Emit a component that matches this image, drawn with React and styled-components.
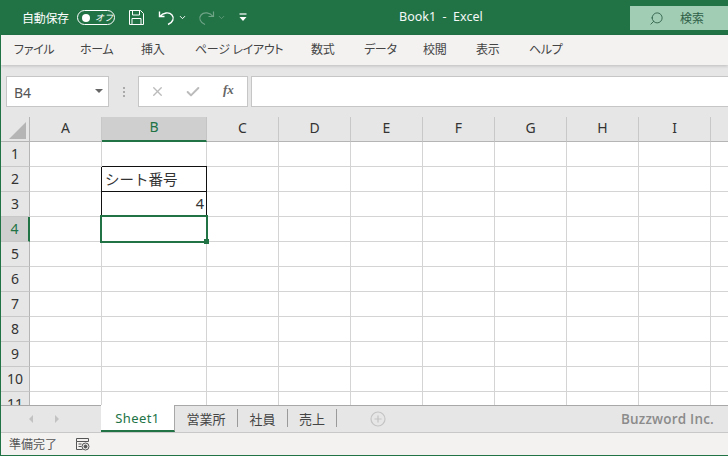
import React from 'react'
import styled, { createGlobalStyle } from 'styled-components'
import { Search, ChevronDown, X, Check } from 'lucide-react'

const Global = createGlobalStyle`
  html, body { margin: 0; padding: 0; background: #fff; }
  body { font-family: "Noto Sans", "Noto Sans CJK JP", sans-serif; }
  * { box-sizing: border-box; }
`

const Window = styled.div`
  width: 728px;
  height: 456px;
  display: flex;
  flex-direction: column;
  overflow: hidden;
  border-left: 1px solid #217346;
  border-bottom: 1px solid #217346;
`

const TitleBar = styled.div`
  height: 35px;
  flex: none;
  margin-left: -1px;
  background: #217346;
  color: #fff;
  display: flex;
  align-items: center;
  position: relative;
  padding-left: 22px;
`

const AutoSave = styled.span`
  font-size: 12px;
  width: 49px;
  white-space: nowrap;
  letter-spacing: -0.3px;
`

const Toggle = styled.span`
  width: 38px;
  height: 15px;
  margin-left: 6px;
  border: 1px solid #fff;
  border-radius: 8px;
  display: flex;
  align-items: center;
  padding-left: 4px;
  &::before {
    content: '';
    width: 8px;
    height: 8px;
    border-radius: 50%;
    background: #fff;
  }
`

const ToggleLabel = styled.span`
  font-size: 9px;
  font-style: italic;
  margin-left: 5px;
  line-height: 1;
`

const QuickIcon = styled.svg`
  flex: none;
  margin-left: ${p => p.$gap || 0}px;
  opacity: ${p => p.$dim ? 0.35 : 1};
`

const TitleText = styled.div`
  position: absolute;
  left: 399px;
  top: 9px;
  font-size: 12.5px;
  line-height: 16px;
  white-space: pre;
  color: #f4f8f6;
`

const SearchBox = styled.div`
  position: absolute;
  left: 630px;
  top: 6px;
  width: 98px;
  height: 24px;
  background: #a0cdb4;
  color: #2f5f48;
  display: flex;
  align-items: center;
  padding-left: 19px;
  font-size: 12px;
  gap: 16px;
`

const RibbonTabs = styled.div`
  height: 30px;
  flex: none;
  background: #f3f2f1;
  display: flex;
  align-items: center;
  padding: 0 0 2px 13px;
  font-size: 12px;
  letter-spacing: -0.3px;
  color: #444;
  font-feature-settings: "palt";
  box-shadow: 0 1px 3px rgba(0, 0, 0, 0.18);
  position: relative;
`

const RibbonTab = styled.span`
  width: ${p => p.$w}px;
  white-space: nowrap;
`

const FormulaArea = styled.div`
  height: 52px;
  flex: none;
  background: #e6e6e6;
  display: flex;
  align-items: flex-start;
  padding: 11px 0 0 5px;
`

const NameBox = styled.div`
  width: 103px;
  height: 31px;
  background: #fff;
  border: 1px solid #c6c6c6;
  display: flex;
  align-items: center;
  justify-content: space-between;
  padding: 2px 5px 0 7px;
  font-size: 14px;
  color: #555;
  &::after {
    content: '';
    border-top: 4px solid #666;
    border-left: 4px solid transparent;
    border-right: 4px solid transparent;
    margin-bottom: 3px;
  }
`

const Dots = styled.span`
  width: 2px;
  height: 10px;
  margin: 11px 13px 0 14px;
  background: repeating-linear-gradient(#aaa 0 2px, transparent 2px 4px);
`

const FormulaButtons = styled.div`
  width: 110px;
  height: 31px;
  background: #fff;
  border: 1px solid #c6c6c6;
  display: flex;
  align-items: center;
  color: #bbb;
  padding-left: 11px;
`

const Fx = styled.span`
  font-family: "Liberation Serif", serif;
  font-style: italic;
  font-weight: 700;
  font-size: 13px;
  color: #666;
  margin-left: 22px;
  margin-bottom: 3px;
`

const FormulaInput = styled.div`
  flex: 1;
  height: 31px;
  margin-left: 3px;
  background: #fff;
  border: 1px solid #c6c6c6;
  border-right: 0;
`

const Sheet = styled.div`
  flex: 1;
  min-height: 0;
  position: relative;
  overflow: hidden;
  display: grid;
  grid-template-columns: 29px 72px 105px repeat(8, 72px);
  grid-template-rows: repeat(12, 25px);
  align-content: start;
`

const Corner = styled.div`
  background: #e6e6e6;
  border-right: 1px solid #b5b5b5;
  border-bottom: 1px solid #b5b5b5;
  position: relative;
  &::after {
    content: '';
    position: absolute;
    right: 3px;
    bottom: 2px;
    border-bottom: 17px solid #b5b5b5;
    border-left: 17px solid transparent;
  }
`

const ColHead = styled.div`
  background: ${p => p.$on ? '#cfcfcf' : '#e6e6e6'};
  color: ${p => p.$on ? '#217346' : '#333'};
  border-right: 1px solid ${p => p.$on ? '#c4c4c4' : '#c8c8c8'};
  border-bottom: ${p => p.$on ? '2px solid #217346' : '1px solid #b5b5b5'};
  font-size: 14px;
  line-height: 20px;
  display: flex;
  align-items: center;
  justify-content: center;
  padding-bottom: 3px;
`

const RowHead = styled.div`
  background: ${p => p.$on ? '#cfcfcf' : '#e6e6e6'};
  color: ${p => p.$on ? '#217346' : '#333'};
  border-right: ${p => p.$on ? '2px solid #217346' : '1px solid #b5b5b5'};
  border-bottom: 1px solid #c8c8c8;
  font-size: 14px;
  line-height: 20px;
  display: flex;
  align-items: center;
  justify-content: center;
  padding-bottom: 1px;
`

const Cell = styled.div`
  border-right: 1px solid ${p => p.$boxed ? '#111' : '#d4d4d4'};
  border-bottom: 1px solid ${p => p.$boxed ? '#111' : '#d4d4d4'};
  box-shadow: ${p => p.$boxed ? '-1px 0 0 #111' + (p.$top ? ', 0 -1px 0 #111' : '') : 'none'};
  font-size: 14.5px;
  line-height: 20px;
  color: #333;
  display: flex;
  align-items: center;
  justify-content: ${p => p.$right ? 'flex-end' : 'flex-start'};
  padding: 0 2px ${p => p.$right ? 3 : 1}px 3px;
  position: relative;
  z-index: ${p => p.$boxed ? 1 : 0};
  white-space: nowrap;
`

const Selection = styled.div`
  position: absolute;
  left: 99px;
  top: 98px;
  width: 108px;
  height: 28px;
  border: 2px solid #217346;
  z-index: 2;
  &::after {
    content: '';
    position: absolute;
    right: -3px;
    bottom: -3px;
    width: 5px;
    height: 5px;
    background: #217346;
  }
`

const TabBar = styled.div`
  height: 28px;
  flex: none;
  background: #e6e6e6;
  border-top: 1px solid #a8a8a8;
  border-bottom: 1px solid #c8c8c8;
  display: flex;
  align-items: stretch;
  position: relative;
  z-index: 3;
`

const Scrollers = styled.div`
  width: 100px;
  flex: none;
  display: flex;
  align-items: center;
  gap: 22px;
  padding-left: 28px;
  &::before, &::after {
    content: '';
    border-top: 4px solid transparent;
    border-bottom: 4px solid transparent;
  }
  &::before { border-right: 4px solid #c2c2c2; }
  &::after { border-left: 4px solid #c2c2c2; }
`

const ActiveTab = styled.div`
  width: 74px;
  margin-top: -1px;
  background: #fff;
  color: #217346;
  border-bottom: 2px solid #217346;
  border-right: 1px solid #a8a8a8;
  font-size: 13px;
  letter-spacing: 0.4px;
  display: flex;
  align-items: center;
  justify-content: center;
`

const SheetTab = styled.div`
  width: ${p => p.$w}px;
  margin: 3px 0 5px;
  border-right: 1px solid #9a9a9a;
  font-size: 13px;
  color: #444;
  display: flex;
  align-items: center;
  justify-content: center;
`

const AddSheet = styled.svg`
  margin: 5px 0 0 33px;
  flex: none;
`

const Brand = styled.div`
  position: absolute;
  right: 14px;
  top: 4px;
  font-family: "Open Sans", sans-serif;
  font-size: 13.5px;
  font-weight: 600;
  letter-spacing: 0.2px;
  color: #8b8b8b;
`

const StatusBar = styled.div`
  height: 22px;
  flex: none;
  background: #f3f2f1;
  display: flex;
  align-items: center;
  padding-left: 8px;
  font-size: 12px;
  color: #555;
`

const StatusIcon = styled.svg`
  margin-left: 18px;
`

const tabs = [['ファイル', 66], ['ホーム', 61], ['挿入', 54], ['ページ レイアウト', 116], ['数式', 53], ['データ', 59], ['校閲', 53], ['表示', 53], ['ヘルプ', 50]]
const cols = ['A', 'B', 'C', 'D', 'E', 'F', 'G', 'H', 'I', 'J']
const rows = [1, 2, 3, 4, 5, 6, 7, 8, 9, 10, 11]

export default function App () {
  return (
    <Window>
      <Global />
      <TitleBar>
        <AutoSave>自動保存</AutoSave>
        <Toggle><ToggleLabel>オフ</ToggleLabel></Toggle>
        <QuickIcon $gap={13} width="17" height="17" viewBox="0 0 17 17" fill="none" stroke="#fff" strokeWidth="1">
          <path d="M1.500 1.500h11l3 3v11h-14z" />
          <path d="M4.500 1.500v4.500h7V1.500M4 15.500v-6h9v6" />
        </QuickIcon>
        <QuickIcon $gap={13} width="18" height="18" viewBox="0 0 18 18" fill="none" stroke="#fff" strokeWidth="1.4">
          <path d="M1.500 2.500v5h5M2 7.500c3-4 9-5 12-1.500 2.500 3 1 7.500-4 9.500" />
        </QuickIcon>
        <ChevronDown size={9} strokeWidth={2.5} style={{ marginLeft: 2 }} />
        <QuickIcon $dim $gap={10} width="18" height="18" viewBox="0 0 18 18" fill="none" stroke="#fff" strokeWidth="1.2">
          <path d="M16.500 2.500v5h-5M16 7.500c-3-4-9-5-12-1.500-2.500 3-1 7.500 4 9.500" />
        </QuickIcon>
        <ChevronDown size={9} strokeWidth={2} style={{ marginLeft: 2, opacity: 0.35 }} />
        <QuickIcon $gap={13} width="8" height="9" viewBox="0 0 8 9" fill="none" stroke="#fff" strokeWidth="1.2">
          <path d="M0.500 1h7" />
          <path d="M0.500 4l3.500 4 3.500-4z" fill="#fff" stroke="none" />
        </QuickIcon>
        <TitleText>{'Book1  -  Excel'}</TitleText>
        <SearchBox>
          <Search size={15} strokeWidth={1.4} style={{ transform: 'scaleX(-1)' }} />
          <span>検索</span>
        </SearchBox>
      </TitleBar>
      <RibbonTabs>
        {tabs.map(([t, w]) => <RibbonTab key={t} $w={w}>{t}</RibbonTab>)}
      </RibbonTabs>
      <FormulaArea>
        <NameBox>B4</NameBox>
        <Dots />
        <FormulaButtons>
          <X size={15} strokeWidth={2.2} />
          <Check size={16} strokeWidth={3} style={{ marginLeft: 20 }} />
          <Fx>fx</Fx>
        </FormulaButtons>
        <FormulaInput />
      </FormulaArea>
      <Sheet>
        <Corner />
        {cols.map(c => <ColHead key={c} $on={c === 'B'}>{c === 'J' ? '' : c}</ColHead>)}
        {rows.map(r => (
          <React.Fragment key={r}>
            <RowHead $on={r === 4}>{r}</RowHead>
            {cols.map(c => {
              const boxed = c === 'B' && (r === 2 || r === 3)
              return (
                <Cell key={c} $boxed={boxed} $top={r === 2} $right={r === 3}>
                  {c === 'B' && r === 2 && 'シート番号'}
                  {c === 'B' && r === 3 && '4'}
                </Cell>
              )
            })}
          </React.Fragment>
        ))}
        <Selection />
      </Sheet>
      <TabBar>
        <Scrollers />
        <ActiveTab>Sheet1</ActiveTab>
        <SheetTab $w={63}>営業所</SheetTab>
        <SheetTab $w={50}>社員</SheetTab>
        <SheetTab $w={49}>売上</SheetTab>
        <AddSheet width="16" height="16" viewBox="0 0 16 16" fill="none" stroke="#c4c4c4" strokeWidth="1.2">
          <circle cx="8" cy="8" r="7" />
          <path d="M8 4.500v7M4.500 8h7" />
        </AddSheet>
        <Brand>Buzzword Inc.</Brand>
      </TabBar>
      <StatusBar>
        <span>準備完了</span>
        <StatusIcon width="15" height="14" viewBox="0 0 15 14" fill="none" stroke="#555" strokeWidth="1">
          <path d="M1.500 1.500h12v3h-12zM1.500 4.500v8h6" />
          <path d="M3.500 7h3M3.500 9.500h3" />
          <circle cx="10.500" cy="9.500" r="3.500" />
          <circle cx="10.500" cy="9.500" r="1.500" fill="#555" />
        </StatusIcon>
      </StatusBar>
    </Window>
  )
}
